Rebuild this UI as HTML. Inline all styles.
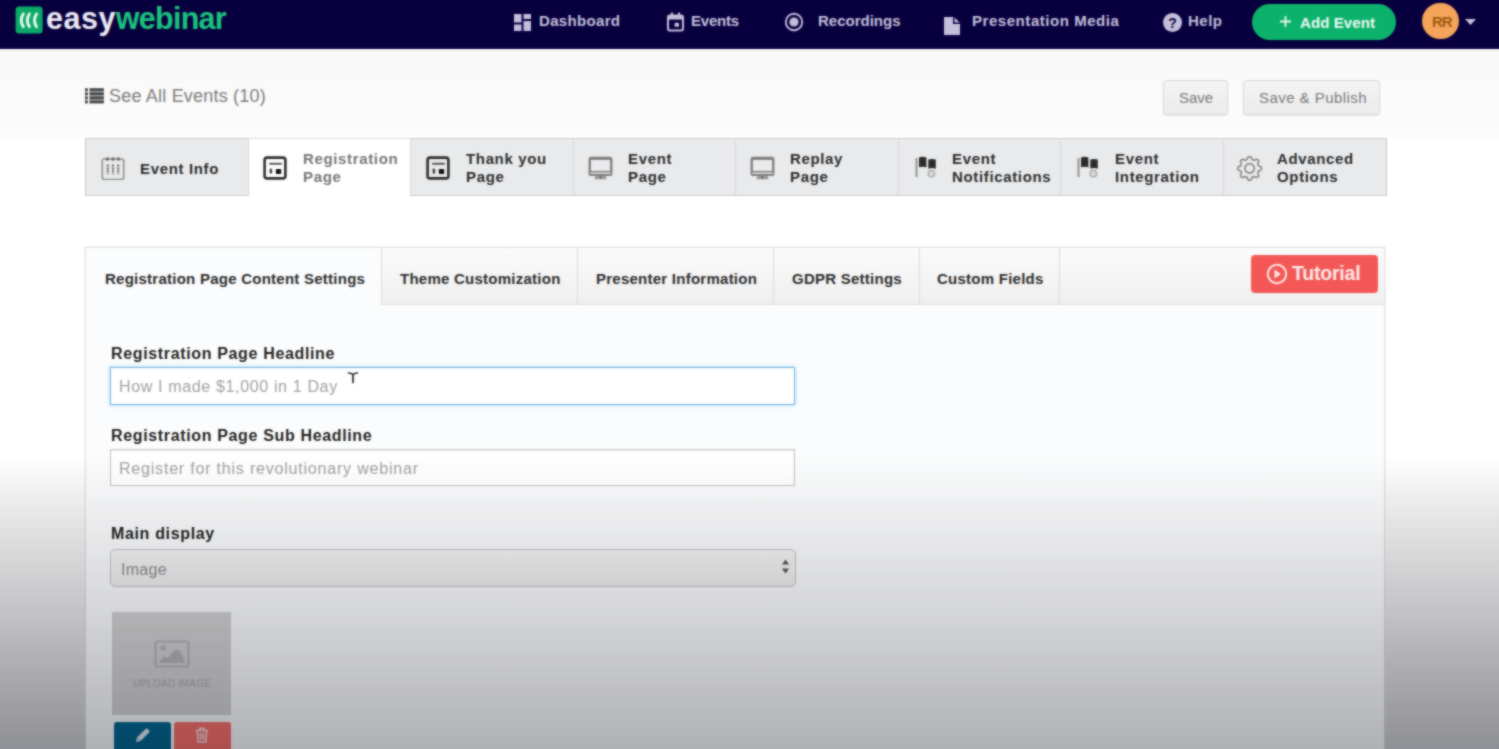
<!DOCTYPE html>
<html><head><meta charset="utf-8">
<style>
html,body{margin:0;padding:0;}
body{width:1499px;height:749px;overflow:hidden;position:relative;background:#fff;font-family:"Liberation Sans",sans-serif;}
.a{position:absolute;}
.t{position:absolute;white-space:nowrap;line-height:1;}
.nav{left:-10px;top:-10px;width:1519px;height:59px;background:#09003f;}
.nv{font-size:15px;font-weight:700;color:#c4c0dc;top:13px;}
.hdr{left:-10px;top:49px;width:1519px;height:88px;background:linear-gradient(#f8f8f8,#fbfbfb 70%,#fcfcfc);}
.btn{position:absolute;top:80px;height:35px;box-sizing:border-box;border:1px solid #d9d9d9;border-radius:3px;background:linear-gradient(#f4f4f4,#ececec);box-shadow:0 1px 1px rgba(0,0,0,.08);}
.bt{font-size:15px;color:#7a7a7a;top:90px;}
.tabs{left:85px;top:138px;width:1302px;height:58px;box-sizing:border-box;border:1px solid #d6d7d9;background:#e9eaec;}
.tab{position:absolute;top:138px;height:58px;box-sizing:border-box;border-left:1px solid #d6d7d9;}
.tl{font-size:15px;font-weight:700;color:#2b2b2b;line-height:18px;letter-spacing:0.65px}
.panel{left:85px;top:247px;width:1300px;height:520px;box-sizing:border-box;border:1px solid #e6e6e8;box-shadow:0 0 2px rgba(0,0,0,.07);background:#fbfcfd;}
.sbar{left:86px;top:248px;width:1298px;height:57px;background:linear-gradient(#fbfbfb,#efefef);border-bottom:1px solid #dedede;box-sizing:border-box;}
.st{position:absolute;top:248px;height:56px;box-sizing:border-box;border-left:1px solid #dcdcdc;}
.stt{font-size:15px;font-weight:700;color:#2e2e2e;top:271px;letter-spacing:0.25px}
.lbl{font-size:16px;font-weight:700;color:#1f1f1f;letter-spacing:0.65px}
.inp{position:absolute;left:110px;width:685px;box-sizing:border-box;background:#fff;}
.ph{font-size:16px;color:#a2a2a2;letter-spacing:0.65px}
.ov{left:-10px;top:0;width:1519px;height:760px;pointer-events:none;}
</style></head><body>
<div class="a" style="left:0;top:0;width:1499px;height:749px;">

<!-- NAVBAR -->
<div class="a nav"></div>
<svg class="a" style="left:15px;top:6px" width="29" height="29" viewBox="0 0 29 29">
  <rect x="0.6" y="0.4" width="27" height="27" rx="3.5" fill="#0cab6a"/>
  <path d="M8.3 8 Q4.1 14.2 8.3 20.6" fill="none" stroke="#e6f5ec" stroke-width="3" stroke-linecap="round"/>
  <path d="M14.4 8 Q10.2 14.2 14.4 20.6" fill="none" stroke="#e6f5ec" stroke-width="3" stroke-linecap="round"/>
  <path d="M21.5 8 Q17.3 14.2 21.5 20.6" fill="none" stroke="#e6f5ec" stroke-width="3" stroke-linecap="round"/>
</svg>
<div class="t" style="left:46px;top:3px;font-size:30.5px;font-weight:700;color:#ecebf3;letter-spacing:0.5px">easy<span style="color:#1cc47d;letter-spacing:-0.75px">webinar</span></div>

<!-- dashboard icon -->
<svg class="a" style="left:514px;top:14px" width="18" height="18" viewBox="0 0 18 18" fill="#c4c0dc">
  <rect x="0" y="0" width="7.5" height="8.5"/><rect x="9.5" y="0" width="7.5" height="5"/>
  <rect x="0" y="10.5" width="7.5" height="6.5"/><rect x="9.5" y="7" width="7.5" height="10"/>
</svg>
<div class="t nv" style="left:539px;letter-spacing:0.33px">Dashboard</div>
<!-- events icon -->
<svg class="a" style="left:667px;top:12px" width="17" height="20" viewBox="0 0 17 20">
  <rect x="1" y="3.5" width="15" height="15" rx="2" fill="none" stroke="#c4c0dc" stroke-width="2"/>
  <rect x="1" y="3.5" width="15" height="4" fill="#c4c0dc"/>
  <rect x="4" y="0.5" width="2" height="4" fill="#c4c0dc"/><rect x="11" y="0.5" width="2" height="4" fill="#c4c0dc"/>
  <rect x="7.6" y="10.8" width="4.4" height="4" rx="0.8" fill="#c4c0dc"/>
</svg>
<div class="t nv" style="left:691px;letter-spacing:-0.2px">Events</div>
<!-- recordings icon -->
<svg class="a" style="left:784px;top:12px" width="20" height="20" viewBox="0 0 20 20">
  <circle cx="10" cy="10" r="8.2" fill="none" stroke="#c4c0dc" stroke-width="1.9"/>
  <circle cx="10" cy="10" r="4.6" fill="#c4c0dc"/>
</svg>
<div class="t nv" style="left:818px;">Recordings</div>
<!-- doc icon -->
<svg class="a" style="left:943px;top:16px" width="18" height="20" viewBox="0 0 18 20">
  <path d="M1 1 H10 L17 8 V19 H1 Z" fill="#c4c0dc"/>
  <path d="M10 1 V8 H17" fill="#09003f"/>
  <path d="M11.5 1.5 L16.5 6.5 H11.5Z" fill="#c4c0dc"/>
</svg>
<div class="t nv" style="left:972px;letter-spacing:0.55px">Presentation Media</div>
<!-- help icon -->
<svg class="a" style="left:1162px;top:12px" width="21" height="21" viewBox="0 0 21 21">
  <circle cx="10.5" cy="10.5" r="9.5" fill="#c4c0dc"/>
  <text x="10.5" y="15.5" text-anchor="middle" font-family="Liberation Sans" font-weight="700" font-size="14" fill="#09003f">?</text>
</svg>
<div class="t nv" style="left:1188px;letter-spacing:0.5px">Help</div>
<!-- add event -->
<div class="a" style="left:1252px;top:4px;width:144px;height:36px;border-radius:18px;background:#0db26d;"></div>
<svg class="a" style="left:1279px;top:15px" width="13" height="13" viewBox="0 0 13 13"><path d="M6.5 1V12M1 6.5H12" stroke="#e6f7ee" stroke-width="1.8"/></svg>
<div class="t nv" style="left:1300px;top:15px;color:#eef9f3;letter-spacing:0.1px">Add Event</div>
<!-- avatar -->
<div class="a" style="left:1422px;top:2.5px;width:36.5px;height:36px;border-radius:50%;background:#f4a55b;"></div>
<div class="t" style="left:1432px;top:14px;font-size:15px;font-weight:700;color:#9f5c10;letter-spacing:-1px">RR</div>
<svg class="a" style="left:1465px;top:19px" width="11" height="6" viewBox="0 0 11 6"><path d="M0 0H11L5.5 6Z" fill="#c4c0dc"/></svg>

<!-- HEADER -->
<div class="a hdr"></div>
<svg class="a" style="left:85px;top:88px" width="20" height="16" viewBox="0 0 20 16">
  <rect x="4.6" y="0.3" width="14.2" height="15" fill="#a9a9a9"/><rect x="0" y="0.3" width="2.8" height="15" fill="#c8c8c8"/>
  <g fill="#474747"><rect x="0" y="0.3" width="2.8" height="2.7"/><rect x="4.6" y="0.3" width="14.2" height="2.7"/>
  <rect x="0" y="4.4" width="2.8" height="2.7"/><rect x="4.6" y="4.4" width="14.2" height="2.7"/>
  <rect x="0" y="8.5" width="2.8" height="2.7"/><rect x="4.6" y="8.5" width="14.2" height="2.7"/>
  <rect x="0" y="12.6" width="2.8" height="2.7"/><rect x="4.6" y="12.6" width="14.2" height="2.7"/></g>
</svg>
<div class="t" style="left:109px;top:87px;font-size:18px;color:#7c7c7c;letter-spacing:0.2px;">See All Events (10)</div>
<div class="btn" style="left:1163px;width:65px;"></div>
<div class="t bt" style="left:1179px;">Save</div>
<div class="btn" style="left:1243px;width:137px;"></div>
<div class="t bt" style="left:1259px;letter-spacing:0.45px">Save &amp; Publish</div>

<!-- MAIN TABS -->
<div class="a tabs"></div>
<div class="a" style="left:248px;top:138px;width:163px;height:58px;background:#fff;border-top:1px solid #e0e0e0;box-sizing:border-box"></div>
<div class="tab" style="left:248px"></div>
<div class="tab" style="left:410px"></div>
<div class="tab" style="left:573px"></div>
<div class="tab" style="left:735px"></div>
<div class="tab" style="left:898px"></div>
<div class="tab" style="left:1060px"></div>
<div class="tab" style="left:1223px"></div>

<!-- tab icons -->
<svg class="a" style="left:101px;top:156px" width="24" height="24" viewBox="0 0 24 24">
  <rect x="1.3" y="3" width="21.4" height="20.5" rx="2.2" fill="none" stroke="#8f8f8f" stroke-width="1.6"/>
  <circle cx="6.5" cy="3" r="1.7" fill="#666"/><circle cx="12" cy="3" r="1.7" fill="#666"/><circle cx="17.3" cy="3" r="1.7" fill="#666"/>
  <path d="M6.8 8.5V18.2M12 8.5V18.2M17.2 8.5V18.2" stroke="#6f6f6f" stroke-width="2.2" stroke-dasharray="2 0.9"/>
</svg>
<div class="t tl" style="left:140px;top:160px;">Event Info</div>

<svg class="a" style="left:263px;top:156px" width="25" height="25" viewBox="0 0 25 25">
  <rect x="1.6" y="1.6" width="20.8" height="20.8" rx="2.5" fill="none" stroke="#2e2e2e" stroke-width="2.6"/>
  <path d="M7 7.7H18" stroke="#555" stroke-width="2" stroke-linecap="round"/>
  <rect x="6.6" y="12.4" width="2.6" height="5.4" rx="1.2" fill="#444"/>
  <rect x="12.8" y="13" width="5.4" height="5" rx="0.8" fill="#111"/>
</svg>
<div class="t tl" style="left:303px;top:150px;color:#777;">Registration<br>Page</div>

<svg class="a" style="left:426px;top:156px" width="25" height="25" viewBox="0 0 25 25">
  <rect x="1.6" y="1.6" width="20.8" height="20.8" rx="2.5" fill="none" stroke="#2e2e2e" stroke-width="2.6"/>
  <path d="M7 7.7H18" stroke="#555" stroke-width="2" stroke-linecap="round"/>
  <rect x="6.6" y="12.4" width="2.6" height="5.4" rx="1.2" fill="#444"/>
  <rect x="12.8" y="13" width="5.4" height="5" rx="0.8" fill="#111"/>
</svg>
<div class="t tl" style="left:466px;top:150px;">Thank you<br>Page</div>

<svg class="a" style="left:588px;top:156px" width="25" height="24" viewBox="0 0 25 24">
  <rect x="0.6" y="0.8" width="23.8" height="19.2" rx="2.6" fill="#7e7e7e"/>
  <rect x="2.9" y="3.9" width="19.2" height="11" fill="#eaebed"/>
  <rect x="2.4" y="16.2" width="20.2" height="1.9" fill="#d2d2d2"/>
  <path d="M7.5 20H17.5L18.8 23.2H6.2Z" fill="#9a9a9a"/>
  <path d="M12.5 20V23" stroke="#666" stroke-width="1.2"/>
</svg>
<div class="t tl" style="left:628px;top:150px;">Event<br>Page</div>

<svg class="a" style="left:750px;top:156px" width="25" height="24" viewBox="0 0 25 24">
  <rect x="0.6" y="0.8" width="23.8" height="19.2" rx="2.6" fill="#7e7e7e"/>
  <rect x="2.9" y="3.9" width="19.2" height="11" fill="#eaebed"/>
  <rect x="2.4" y="16.2" width="20.2" height="1.9" fill="#d2d2d2"/>
  <path d="M7.5 20H17.5L18.8 23.2H6.2Z" fill="#9a9a9a"/>
  <path d="M12.5 20V23" stroke="#666" stroke-width="1.2"/>
</svg>
<div class="t tl" style="left:790px;top:150px;">Replay<br>Page</div>

<svg class="a" style="left:915px;top:156px" width="22" height="23" viewBox="0 0 22 23">
  <path d="M1.5 2V21" stroke="#9a9a9a" stroke-width="2.2"/>
  <path d="M4 1.5Q7.5 0.2 11.4 1.5V11.3Q7.5 10 4 11.3Z" fill="#2b2b2b"/>
  <path d="M13.3 3.6Q17 2.4 20.8 3.6V12.7Q17 11.5 13.3 12.7Z" fill="#2b2b2b"/>
  <circle cx="16.4" cy="17.6" r="3.2" fill="none" stroke="#ababab" stroke-width="1.5"/>
  <path d="M16.4 15.8V17.8H18" fill="none" stroke="#bbb" stroke-width="1"/>
</svg>
<div class="t tl" style="left:952px;top:150px;">Event<br>Notifications</div>

<svg class="a" style="left:1077px;top:156px" width="22" height="23" viewBox="0 0 22 23">
  <path d="M1.5 2V21" stroke="#9a9a9a" stroke-width="2.2"/>
  <path d="M4 1.5Q7.5 0.2 11.4 1.5V11.3Q7.5 10 4 11.3Z" fill="#2b2b2b"/>
  <path d="M13.3 3.6Q17 2.4 20.8 3.6V12.7Q17 11.5 13.3 12.7Z" fill="#2b2b2b"/>
  <circle cx="16.4" cy="17.6" r="3.2" fill="none" stroke="#ababab" stroke-width="1.5"/>
  <path d="M16.4 15.8V17.8H18" fill="none" stroke="#bbb" stroke-width="1"/>
</svg>
<div class="t tl" style="left:1115px;top:150px;">Event<br>Integration</div>

<svg class="a" style="left:1237px;top:156px" width="26" height="25" viewBox="0 0 26 25">
  <g transform="translate(12.6 12.4)" fill="none" stroke="#8a8a8a" stroke-width="1.7">
    <path d="M0.00 -11.85 L0.46 -11.82 L0.92 -11.71 L1.36 -11.47 L1.74 -11.01 L2.05 -10.30 L2.30 -9.58 L2.56 -9.09 L2.86 -8.80 L3.17 -8.60 L3.50 -8.45 L3.84 -8.33 L4.20 -8.24 L4.62 -8.24 L5.15 -8.40 L5.83 -8.73 L6.55 -9.02 L7.15 -9.07 L7.63 -8.93 L8.03 -8.69 L8.38 -8.38 L8.69 -8.03 L8.93 -7.63 L9.07 -7.15 L9.02 -6.55 L8.73 -5.83 L8.40 -5.15 L8.24 -4.62 L8.24 -4.20 L8.33 -3.84 L8.45 -3.50 L8.60 -3.17 L8.80 -2.86 L9.09 -2.56 L9.58 -2.30 L10.30 -2.05 L11.01 -1.74 L11.47 -1.36 L11.71 -0.92 L11.82 -0.46 L11.85 0.00 L11.82 0.46 L11.71 0.92 L11.47 1.36 L11.01 1.74 L10.30 2.05 L9.58 2.30 L9.09 2.56 L8.80 2.86 L8.60 3.17 L8.45 3.50 L8.33 3.84 L8.24 4.20 L8.24 4.62 L8.40 5.15 L8.73 5.83 L9.02 6.55 L9.07 7.15 L8.93 7.63 L8.69 8.03 L8.38 8.38 L8.03 8.69 L7.63 8.93 L7.15 9.07 L6.55 9.02 L5.83 8.73 L5.15 8.40 L4.62 8.24 L4.20 8.24 L3.84 8.33 L3.50 8.45 L3.17 8.60 L2.86 8.80 L2.56 9.09 L2.30 9.58 L2.05 10.30 L1.74 11.01 L1.36 11.47 L0.92 11.71 L0.46 11.82 L0.00 11.85 L-0.46 11.82 L-0.92 11.71 L-1.36 11.47 L-1.74 11.01 L-2.05 10.30 L-2.30 9.58 L-2.56 9.09 L-2.86 8.80 L-3.17 8.60 L-3.50 8.45 L-3.84 8.33 L-4.20 8.24 L-4.62 8.24 L-5.15 8.40 L-5.83 8.73 L-6.55 9.02 L-7.15 9.07 L-7.63 8.93 L-8.03 8.69 L-8.38 8.38 L-8.69 8.03 L-8.93 7.63 L-9.07 7.15 L-9.02 6.55 L-8.73 5.83 L-8.40 5.15 L-8.24 4.62 L-8.24 4.20 L-8.33 3.84 L-8.45 3.50 L-8.60 3.17 L-8.80 2.86 L-9.09 2.56 L-9.58 2.30 L-10.30 2.05 L-11.01 1.74 L-11.47 1.36 L-11.71 0.92 L-11.82 0.46 L-11.85 0.00 L-11.82 -0.46 L-11.71 -0.92 L-11.47 -1.36 L-11.01 -1.74 L-10.30 -2.05 L-9.58 -2.30 L-9.09 -2.56 L-8.80 -2.86 L-8.60 -3.17 L-8.45 -3.50 L-8.33 -3.84 L-8.24 -4.20 L-8.24 -4.62 L-8.40 -5.15 L-8.73 -5.83 L-9.02 -6.55 L-9.07 -7.15 L-8.93 -7.63 L-8.69 -8.03 L-8.38 -8.38 L-8.03 -8.69 L-7.63 -8.93 L-7.15 -9.07 L-6.55 -9.02 L-5.83 -8.73 L-5.15 -8.40 L-4.62 -8.24 L-4.20 -8.24 L-3.84 -8.33 L-3.50 -8.45 L-3.17 -8.60 L-2.86 -8.80 L-2.56 -9.09 L-2.30 -9.58 L-2.05 -10.30 L-1.74 -11.01 L-1.36 -11.47 L-0.92 -11.71 L-0.46 -11.82Z"/>
    <circle r="4.7"/>
  </g>
</svg>
<div class="t tl" style="left:1277px;top:150px;">Advanced<br>Options</div>

<!-- PANEL -->
<div class="a panel"></div>
<div class="a sbar"></div>
<div class="a" style="left:86px;top:248px;width:295px;height:57px;background:#fbfcfd;"></div>
<div class="st" style="left:381px"></div>
<div class="st" style="left:577px"></div>
<div class="st" style="left:773px"></div>
<div class="st" style="left:919px"></div>
<div class="st" style="left:1059px"></div>
<div class="t stt" style="left:105px;">Registration Page Content Settings</div>
<div class="t stt" style="left:400px;">Theme Customization</div>
<div class="t stt" style="left:596px;">Presenter Information</div>
<div class="t stt" style="left:792px;">GDPR Settings</div>
<div class="t stt" style="left:937px;">Custom Fields</div>

<div class="a" style="left:1251px;top:255px;width:127px;height:38px;border-radius:4px;background:#f35957;"></div>
<svg class="a" style="left:1266px;top:263px" width="22" height="22" viewBox="0 0 22 22">
  <circle cx="11" cy="11" r="9.2" fill="none" stroke="#fde9e8" stroke-width="2"/>
  <path d="M8.5 6.5 L15 11 L8.5 15.5Z" fill="#fde9e8"/>
</svg>
<div class="t" style="left:1292px;top:264px;font-size:19.5px;font-weight:700;color:#fdecea;letter-spacing:-0.2px">Tutorial</div>

<!-- FORM -->
<div class="t lbl" style="left:111px;top:346px;">Registration Page Headline</div>
<div class="inp" style="top:367px;height:38px;border:1px solid #6db5e3;box-shadow:0 0 4px rgba(100,190,240,.6);"></div>
<div class="t ph" style="left:119px;top:379px;">How I made $1,000 in 1 Day</div>
<svg class="a" style="left:347px;top:371px" width="12" height="13" viewBox="0 0 12 13"><path d="M1.5 2 Q5 1.8 6 4 Q7 1.8 10.5 2M6 3.5V11.5" fill="none" stroke="#2a2a2a" stroke-width="1.7" stroke-linecap="round"/></svg>

<div class="t lbl" style="left:111px;top:428px;">Registration Page Sub Headline</div>
<div class="inp" style="top:449px;height:37px;border:1px solid #c4c4c4;box-shadow:inset 0 1px 2px rgba(0,0,0,.08);"></div>
<div class="t ph" style="left:119px;top:461px;letter-spacing:0.8px">Register for this revolutionary webinar</div>

<div class="t lbl" style="left:111px;top:526px;">Main display</div>
<div class="a" style="left:110px;top:549px;width:686px;height:38px;box-sizing:border-box;border:1px solid #c2c2c2;border-radius:5px;background:linear-gradient(#f5f5f5,#eeeeee);"></div>
<div class="t" style="left:121px;top:562px;font-size:16px;color:#8c8c8c;letter-spacing:0.3px">Image</div>
<svg class="a" style="left:781px;top:559px" width="9" height="15" viewBox="0 0 9 15"><path d="M4.5 0.5L8 5.5H1Z M4.5 14.5L8 9.5H1Z" fill="#555"/></svg>

<div class="a" style="left:112px;top:612px;width:119px;height:103px;background:#d2d2d2;"></div>
<svg class="a" style="left:154px;top:640px" width="36" height="28" viewBox="0 0 36 28">
  <rect x="1.5" y="1.5" width="33" height="25" rx="2" fill="none" stroke="#b5b5b5" stroke-width="2.2"/>
  <circle cx="9" cy="8" r="2.8" fill="#b5b5b5"/>
  <path d="M5 23 Q8.5 15.5 12 17.5 Q14.5 18.5 17 14 Q21 7.5 25 10 Q29 14 31 23Z" fill="#b5b5b5"/>
</svg>
<div class="t" style="left:133px;top:679px;font-size:10px;font-weight:700;color:#b6b6b6;letter-spacing:0px">UPLOAD IMAGE</div>
<div class="a" style="left:114px;top:722px;width:57px;height:40px;background:#04678f;border-radius:3px;"></div>
<div class="a" style="left:174px;top:722px;width:57px;height:40px;background:#f8706a;border-radius:3px;"></div>
<svg class="a" style="left:135px;top:727px" width="16" height="16" viewBox="0 0 16 16"><path d="M1 15 L2 10.5 L10.3 2.2 Q11.6 0.9 12.9 2.2 L13.8 3.1 Q15.1 4.4 13.8 5.7 L5.5 14Z" fill="#e4eef3"/><path d="M2 10.5 L5.5 14" stroke="#7fa6b8" stroke-width="0.8"/></svg>
<svg class="a" style="left:195px;top:727px" width="14" height="16" viewBox="0 0 14 16" fill="none" stroke="#fbdcdb" stroke-width="1.6"><path d="M0.8 3.5H13.2M4.8 3.5V1.2H9.2V3.5M2.3 3.5L3.3 15H10.7L11.7 3.5M5.6 6V12.8M8.4 6V12.8"/></svg>

<!-- OVERLAY (video vignette) -->
<div class="a ov" style="background:linear-gradient(to bottom, rgba(0,4,16,0) 0px, rgba(0,4,16,0) 455px, rgba(0,4,16,0.062) 518px, rgba(0,4,16,0.158) 615px, rgba(0,4,16,0.30) 749px);"></div>
</div>
<div class="a" style="left:0;top:0;width:1499px;height:749px;filter:blur(0.85px);opacity:0.65">

<!-- NAVBAR -->
<div class="a nav"></div>
<svg class="a" style="left:15px;top:6px" width="29" height="29" viewBox="0 0 29 29">
  <rect x="0.6" y="0.4" width="27" height="27" rx="3.5" fill="#0cab6a"/>
  <path d="M8.3 8 Q4.1 14.2 8.3 20.6" fill="none" stroke="#e6f5ec" stroke-width="3" stroke-linecap="round"/>
  <path d="M14.4 8 Q10.2 14.2 14.4 20.6" fill="none" stroke="#e6f5ec" stroke-width="3" stroke-linecap="round"/>
  <path d="M21.5 8 Q17.3 14.2 21.5 20.6" fill="none" stroke="#e6f5ec" stroke-width="3" stroke-linecap="round"/>
</svg>
<div class="t" style="left:46px;top:3px;font-size:30.5px;font-weight:700;color:#ecebf3;letter-spacing:0.5px">easy<span style="color:#1cc47d;letter-spacing:-0.75px">webinar</span></div>

<!-- dashboard icon -->
<svg class="a" style="left:514px;top:14px" width="18" height="18" viewBox="0 0 18 18" fill="#c4c0dc">
  <rect x="0" y="0" width="7.5" height="8.5"/><rect x="9.5" y="0" width="7.5" height="5"/>
  <rect x="0" y="10.5" width="7.5" height="6.5"/><rect x="9.5" y="7" width="7.5" height="10"/>
</svg>
<div class="t nv" style="left:539px;letter-spacing:0.33px">Dashboard</div>
<!-- events icon -->
<svg class="a" style="left:667px;top:12px" width="17" height="20" viewBox="0 0 17 20">
  <rect x="1" y="3.5" width="15" height="15" rx="2" fill="none" stroke="#c4c0dc" stroke-width="2"/>
  <rect x="1" y="3.5" width="15" height="4" fill="#c4c0dc"/>
  <rect x="4" y="0.5" width="2" height="4" fill="#c4c0dc"/><rect x="11" y="0.5" width="2" height="4" fill="#c4c0dc"/>
  <rect x="7.6" y="10.8" width="4.4" height="4" rx="0.8" fill="#c4c0dc"/>
</svg>
<div class="t nv" style="left:691px;letter-spacing:-0.2px">Events</div>
<!-- recordings icon -->
<svg class="a" style="left:784px;top:12px" width="20" height="20" viewBox="0 0 20 20">
  <circle cx="10" cy="10" r="8.2" fill="none" stroke="#c4c0dc" stroke-width="1.9"/>
  <circle cx="10" cy="10" r="4.6" fill="#c4c0dc"/>
</svg>
<div class="t nv" style="left:818px;">Recordings</div>
<!-- doc icon -->
<svg class="a" style="left:943px;top:16px" width="18" height="20" viewBox="0 0 18 20">
  <path d="M1 1 H10 L17 8 V19 H1 Z" fill="#c4c0dc"/>
  <path d="M10 1 V8 H17" fill="#09003f"/>
  <path d="M11.5 1.5 L16.5 6.5 H11.5Z" fill="#c4c0dc"/>
</svg>
<div class="t nv" style="left:972px;letter-spacing:0.55px">Presentation Media</div>
<!-- help icon -->
<svg class="a" style="left:1162px;top:12px" width="21" height="21" viewBox="0 0 21 21">
  <circle cx="10.5" cy="10.5" r="9.5" fill="#c4c0dc"/>
  <text x="10.5" y="15.5" text-anchor="middle" font-family="Liberation Sans" font-weight="700" font-size="14" fill="#09003f">?</text>
</svg>
<div class="t nv" style="left:1188px;letter-spacing:0.5px">Help</div>
<!-- add event -->
<div class="a" style="left:1252px;top:4px;width:144px;height:36px;border-radius:18px;background:#0db26d;"></div>
<svg class="a" style="left:1279px;top:15px" width="13" height="13" viewBox="0 0 13 13"><path d="M6.5 1V12M1 6.5H12" stroke="#e6f7ee" stroke-width="1.8"/></svg>
<div class="t nv" style="left:1300px;top:15px;color:#eef9f3;letter-spacing:0.1px">Add Event</div>
<!-- avatar -->
<div class="a" style="left:1422px;top:2.5px;width:36.5px;height:36px;border-radius:50%;background:#f4a55b;"></div>
<div class="t" style="left:1432px;top:14px;font-size:15px;font-weight:700;color:#9f5c10;letter-spacing:-1px">RR</div>
<svg class="a" style="left:1465px;top:19px" width="11" height="6" viewBox="0 0 11 6"><path d="M0 0H11L5.5 6Z" fill="#c4c0dc"/></svg>

<!-- HEADER -->
<div class="a hdr"></div>
<svg class="a" style="left:85px;top:88px" width="20" height="16" viewBox="0 0 20 16">
  <rect x="4.6" y="0.3" width="14.2" height="15" fill="#a9a9a9"/><rect x="0" y="0.3" width="2.8" height="15" fill="#c8c8c8"/>
  <g fill="#474747"><rect x="0" y="0.3" width="2.8" height="2.7"/><rect x="4.6" y="0.3" width="14.2" height="2.7"/>
  <rect x="0" y="4.4" width="2.8" height="2.7"/><rect x="4.6" y="4.4" width="14.2" height="2.7"/>
  <rect x="0" y="8.5" width="2.8" height="2.7"/><rect x="4.6" y="8.5" width="14.2" height="2.7"/>
  <rect x="0" y="12.6" width="2.8" height="2.7"/><rect x="4.6" y="12.6" width="14.2" height="2.7"/></g>
</svg>
<div class="t" style="left:109px;top:87px;font-size:18px;color:#7c7c7c;letter-spacing:0.2px;">See All Events (10)</div>
<div class="btn" style="left:1163px;width:65px;"></div>
<div class="t bt" style="left:1179px;">Save</div>
<div class="btn" style="left:1243px;width:137px;"></div>
<div class="t bt" style="left:1259px;letter-spacing:0.45px">Save &amp; Publish</div>

<!-- MAIN TABS -->
<div class="a tabs"></div>
<div class="a" style="left:248px;top:138px;width:163px;height:58px;background:#fff;border-top:1px solid #e0e0e0;box-sizing:border-box"></div>
<div class="tab" style="left:248px"></div>
<div class="tab" style="left:410px"></div>
<div class="tab" style="left:573px"></div>
<div class="tab" style="left:735px"></div>
<div class="tab" style="left:898px"></div>
<div class="tab" style="left:1060px"></div>
<div class="tab" style="left:1223px"></div>

<!-- tab icons -->
<svg class="a" style="left:101px;top:156px" width="24" height="24" viewBox="0 0 24 24">
  <rect x="1.3" y="3" width="21.4" height="20.5" rx="2.2" fill="none" stroke="#8f8f8f" stroke-width="1.6"/>
  <circle cx="6.5" cy="3" r="1.7" fill="#666"/><circle cx="12" cy="3" r="1.7" fill="#666"/><circle cx="17.3" cy="3" r="1.7" fill="#666"/>
  <path d="M6.8 8.5V18.2M12 8.5V18.2M17.2 8.5V18.2" stroke="#6f6f6f" stroke-width="2.2" stroke-dasharray="2 0.9"/>
</svg>
<div class="t tl" style="left:140px;top:160px;">Event Info</div>

<svg class="a" style="left:263px;top:156px" width="25" height="25" viewBox="0 0 25 25">
  <rect x="1.6" y="1.6" width="20.8" height="20.8" rx="2.5" fill="none" stroke="#2e2e2e" stroke-width="2.6"/>
  <path d="M7 7.7H18" stroke="#555" stroke-width="2" stroke-linecap="round"/>
  <rect x="6.6" y="12.4" width="2.6" height="5.4" rx="1.2" fill="#444"/>
  <rect x="12.8" y="13" width="5.4" height="5" rx="0.8" fill="#111"/>
</svg>
<div class="t tl" style="left:303px;top:150px;color:#777;">Registration<br>Page</div>

<svg class="a" style="left:426px;top:156px" width="25" height="25" viewBox="0 0 25 25">
  <rect x="1.6" y="1.6" width="20.8" height="20.8" rx="2.5" fill="none" stroke="#2e2e2e" stroke-width="2.6"/>
  <path d="M7 7.7H18" stroke="#555" stroke-width="2" stroke-linecap="round"/>
  <rect x="6.6" y="12.4" width="2.6" height="5.4" rx="1.2" fill="#444"/>
  <rect x="12.8" y="13" width="5.4" height="5" rx="0.8" fill="#111"/>
</svg>
<div class="t tl" style="left:466px;top:150px;">Thank you<br>Page</div>

<svg class="a" style="left:588px;top:156px" width="25" height="24" viewBox="0 0 25 24">
  <rect x="0.6" y="0.8" width="23.8" height="19.2" rx="2.6" fill="#7e7e7e"/>
  <rect x="2.9" y="3.9" width="19.2" height="11" fill="#eaebed"/>
  <rect x="2.4" y="16.2" width="20.2" height="1.9" fill="#d2d2d2"/>
  <path d="M7.5 20H17.5L18.8 23.2H6.2Z" fill="#9a9a9a"/>
  <path d="M12.5 20V23" stroke="#666" stroke-width="1.2"/>
</svg>
<div class="t tl" style="left:628px;top:150px;">Event<br>Page</div>

<svg class="a" style="left:750px;top:156px" width="25" height="24" viewBox="0 0 25 24">
  <rect x="0.6" y="0.8" width="23.8" height="19.2" rx="2.6" fill="#7e7e7e"/>
  <rect x="2.9" y="3.9" width="19.2" height="11" fill="#eaebed"/>
  <rect x="2.4" y="16.2" width="20.2" height="1.9" fill="#d2d2d2"/>
  <path d="M7.5 20H17.5L18.8 23.2H6.2Z" fill="#9a9a9a"/>
  <path d="M12.5 20V23" stroke="#666" stroke-width="1.2"/>
</svg>
<div class="t tl" style="left:790px;top:150px;">Replay<br>Page</div>

<svg class="a" style="left:915px;top:156px" width="22" height="23" viewBox="0 0 22 23">
  <path d="M1.5 2V21" stroke="#9a9a9a" stroke-width="2.2"/>
  <path d="M4 1.5Q7.5 0.2 11.4 1.5V11.3Q7.5 10 4 11.3Z" fill="#2b2b2b"/>
  <path d="M13.3 3.6Q17 2.4 20.8 3.6V12.7Q17 11.5 13.3 12.7Z" fill="#2b2b2b"/>
  <circle cx="16.4" cy="17.6" r="3.2" fill="none" stroke="#ababab" stroke-width="1.5"/>
  <path d="M16.4 15.8V17.8H18" fill="none" stroke="#bbb" stroke-width="1"/>
</svg>
<div class="t tl" style="left:952px;top:150px;">Event<br>Notifications</div>

<svg class="a" style="left:1077px;top:156px" width="22" height="23" viewBox="0 0 22 23">
  <path d="M1.5 2V21" stroke="#9a9a9a" stroke-width="2.2"/>
  <path d="M4 1.5Q7.5 0.2 11.4 1.5V11.3Q7.5 10 4 11.3Z" fill="#2b2b2b"/>
  <path d="M13.3 3.6Q17 2.4 20.8 3.6V12.7Q17 11.5 13.3 12.7Z" fill="#2b2b2b"/>
  <circle cx="16.4" cy="17.6" r="3.2" fill="none" stroke="#ababab" stroke-width="1.5"/>
  <path d="M16.4 15.8V17.8H18" fill="none" stroke="#bbb" stroke-width="1"/>
</svg>
<div class="t tl" style="left:1115px;top:150px;">Event<br>Integration</div>

<svg class="a" style="left:1237px;top:156px" width="26" height="25" viewBox="0 0 26 25">
  <g transform="translate(12.6 12.4)" fill="none" stroke="#8a8a8a" stroke-width="1.7">
    <path d="M0.00 -11.85 L0.46 -11.82 L0.92 -11.71 L1.36 -11.47 L1.74 -11.01 L2.05 -10.30 L2.30 -9.58 L2.56 -9.09 L2.86 -8.80 L3.17 -8.60 L3.50 -8.45 L3.84 -8.33 L4.20 -8.24 L4.62 -8.24 L5.15 -8.40 L5.83 -8.73 L6.55 -9.02 L7.15 -9.07 L7.63 -8.93 L8.03 -8.69 L8.38 -8.38 L8.69 -8.03 L8.93 -7.63 L9.07 -7.15 L9.02 -6.55 L8.73 -5.83 L8.40 -5.15 L8.24 -4.62 L8.24 -4.20 L8.33 -3.84 L8.45 -3.50 L8.60 -3.17 L8.80 -2.86 L9.09 -2.56 L9.58 -2.30 L10.30 -2.05 L11.01 -1.74 L11.47 -1.36 L11.71 -0.92 L11.82 -0.46 L11.85 0.00 L11.82 0.46 L11.71 0.92 L11.47 1.36 L11.01 1.74 L10.30 2.05 L9.58 2.30 L9.09 2.56 L8.80 2.86 L8.60 3.17 L8.45 3.50 L8.33 3.84 L8.24 4.20 L8.24 4.62 L8.40 5.15 L8.73 5.83 L9.02 6.55 L9.07 7.15 L8.93 7.63 L8.69 8.03 L8.38 8.38 L8.03 8.69 L7.63 8.93 L7.15 9.07 L6.55 9.02 L5.83 8.73 L5.15 8.40 L4.62 8.24 L4.20 8.24 L3.84 8.33 L3.50 8.45 L3.17 8.60 L2.86 8.80 L2.56 9.09 L2.30 9.58 L2.05 10.30 L1.74 11.01 L1.36 11.47 L0.92 11.71 L0.46 11.82 L0.00 11.85 L-0.46 11.82 L-0.92 11.71 L-1.36 11.47 L-1.74 11.01 L-2.05 10.30 L-2.30 9.58 L-2.56 9.09 L-2.86 8.80 L-3.17 8.60 L-3.50 8.45 L-3.84 8.33 L-4.20 8.24 L-4.62 8.24 L-5.15 8.40 L-5.83 8.73 L-6.55 9.02 L-7.15 9.07 L-7.63 8.93 L-8.03 8.69 L-8.38 8.38 L-8.69 8.03 L-8.93 7.63 L-9.07 7.15 L-9.02 6.55 L-8.73 5.83 L-8.40 5.15 L-8.24 4.62 L-8.24 4.20 L-8.33 3.84 L-8.45 3.50 L-8.60 3.17 L-8.80 2.86 L-9.09 2.56 L-9.58 2.30 L-10.30 2.05 L-11.01 1.74 L-11.47 1.36 L-11.71 0.92 L-11.82 0.46 L-11.85 0.00 L-11.82 -0.46 L-11.71 -0.92 L-11.47 -1.36 L-11.01 -1.74 L-10.30 -2.05 L-9.58 -2.30 L-9.09 -2.56 L-8.80 -2.86 L-8.60 -3.17 L-8.45 -3.50 L-8.33 -3.84 L-8.24 -4.20 L-8.24 -4.62 L-8.40 -5.15 L-8.73 -5.83 L-9.02 -6.55 L-9.07 -7.15 L-8.93 -7.63 L-8.69 -8.03 L-8.38 -8.38 L-8.03 -8.69 L-7.63 -8.93 L-7.15 -9.07 L-6.55 -9.02 L-5.83 -8.73 L-5.15 -8.40 L-4.62 -8.24 L-4.20 -8.24 L-3.84 -8.33 L-3.50 -8.45 L-3.17 -8.60 L-2.86 -8.80 L-2.56 -9.09 L-2.30 -9.58 L-2.05 -10.30 L-1.74 -11.01 L-1.36 -11.47 L-0.92 -11.71 L-0.46 -11.82Z"/>
    <circle r="4.7"/>
  </g>
</svg>
<div class="t tl" style="left:1277px;top:150px;">Advanced<br>Options</div>

<!-- PANEL -->
<div class="a panel"></div>
<div class="a sbar"></div>
<div class="a" style="left:86px;top:248px;width:295px;height:57px;background:#fbfcfd;"></div>
<div class="st" style="left:381px"></div>
<div class="st" style="left:577px"></div>
<div class="st" style="left:773px"></div>
<div class="st" style="left:919px"></div>
<div class="st" style="left:1059px"></div>
<div class="t stt" style="left:105px;">Registration Page Content Settings</div>
<div class="t stt" style="left:400px;">Theme Customization</div>
<div class="t stt" style="left:596px;">Presenter Information</div>
<div class="t stt" style="left:792px;">GDPR Settings</div>
<div class="t stt" style="left:937px;">Custom Fields</div>

<div class="a" style="left:1251px;top:255px;width:127px;height:38px;border-radius:4px;background:#f35957;"></div>
<svg class="a" style="left:1266px;top:263px" width="22" height="22" viewBox="0 0 22 22">
  <circle cx="11" cy="11" r="9.2" fill="none" stroke="#fde9e8" stroke-width="2"/>
  <path d="M8.5 6.5 L15 11 L8.5 15.5Z" fill="#fde9e8"/>
</svg>
<div class="t" style="left:1292px;top:264px;font-size:19.5px;font-weight:700;color:#fdecea;letter-spacing:-0.2px">Tutorial</div>

<!-- FORM -->
<div class="t lbl" style="left:111px;top:346px;">Registration Page Headline</div>
<div class="inp" style="top:367px;height:38px;border:1px solid #6db5e3;box-shadow:0 0 4px rgba(100,190,240,.6);"></div>
<div class="t ph" style="left:119px;top:379px;">How I made $1,000 in 1 Day</div>
<svg class="a" style="left:347px;top:371px" width="12" height="13" viewBox="0 0 12 13"><path d="M1.5 2 Q5 1.8 6 4 Q7 1.8 10.5 2M6 3.5V11.5" fill="none" stroke="#2a2a2a" stroke-width="1.7" stroke-linecap="round"/></svg>

<div class="t lbl" style="left:111px;top:428px;">Registration Page Sub Headline</div>
<div class="inp" style="top:449px;height:37px;border:1px solid #c4c4c4;box-shadow:inset 0 1px 2px rgba(0,0,0,.08);"></div>
<div class="t ph" style="left:119px;top:461px;letter-spacing:0.8px">Register for this revolutionary webinar</div>

<div class="t lbl" style="left:111px;top:526px;">Main display</div>
<div class="a" style="left:110px;top:549px;width:686px;height:38px;box-sizing:border-box;border:1px solid #c2c2c2;border-radius:5px;background:linear-gradient(#f5f5f5,#eeeeee);"></div>
<div class="t" style="left:121px;top:562px;font-size:16px;color:#8c8c8c;letter-spacing:0.3px">Image</div>
<svg class="a" style="left:781px;top:559px" width="9" height="15" viewBox="0 0 9 15"><path d="M4.5 0.5L8 5.5H1Z M4.5 14.5L8 9.5H1Z" fill="#555"/></svg>

<div class="a" style="left:112px;top:612px;width:119px;height:103px;background:#d2d2d2;"></div>
<svg class="a" style="left:154px;top:640px" width="36" height="28" viewBox="0 0 36 28">
  <rect x="1.5" y="1.5" width="33" height="25" rx="2" fill="none" stroke="#b5b5b5" stroke-width="2.2"/>
  <circle cx="9" cy="8" r="2.8" fill="#b5b5b5"/>
  <path d="M5 23 Q8.5 15.5 12 17.5 Q14.5 18.5 17 14 Q21 7.5 25 10 Q29 14 31 23Z" fill="#b5b5b5"/>
</svg>
<div class="t" style="left:133px;top:679px;font-size:10px;font-weight:700;color:#b6b6b6;letter-spacing:0px">UPLOAD IMAGE</div>
<div class="a" style="left:114px;top:722px;width:57px;height:40px;background:#04678f;border-radius:3px;"></div>
<div class="a" style="left:174px;top:722px;width:57px;height:40px;background:#f8706a;border-radius:3px;"></div>
<svg class="a" style="left:135px;top:727px" width="16" height="16" viewBox="0 0 16 16"><path d="M1 15 L2 10.5 L10.3 2.2 Q11.6 0.9 12.9 2.2 L13.8 3.1 Q15.1 4.4 13.8 5.7 L5.5 14Z" fill="#e4eef3"/><path d="M2 10.5 L5.5 14" stroke="#7fa6b8" stroke-width="0.8"/></svg>
<svg class="a" style="left:195px;top:727px" width="14" height="16" viewBox="0 0 14 16" fill="none" stroke="#fbdcdb" stroke-width="1.6"><path d="M0.8 3.5H13.2M4.8 3.5V1.2H9.2V3.5M2.3 3.5L3.3 15H10.7L11.7 3.5M5.6 6V12.8M8.4 6V12.8"/></svg>

<!-- OVERLAY (video vignette) -->
<div class="a ov" style="background:linear-gradient(to bottom, rgba(0,4,16,0) 0px, rgba(0,4,16,0) 455px, rgba(0,4,16,0.062) 518px, rgba(0,4,16,0.158) 615px, rgba(0,4,16,0.30) 749px);"></div>
</div>
</body></html>
